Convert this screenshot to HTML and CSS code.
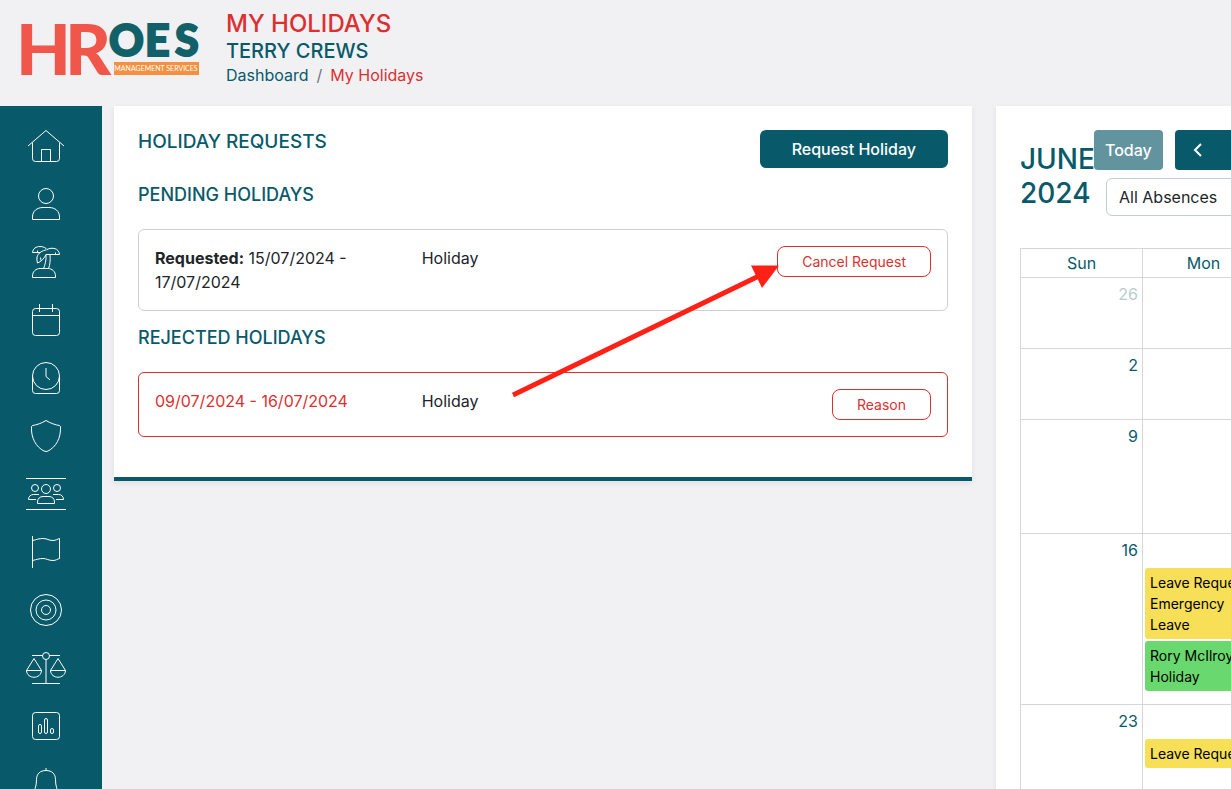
FILE: index.html
```html
<!DOCTYPE html>
<html lang="en">
<head>
  <meta charset="utf-8">
  <title>My Holidays</title>
  <link rel="stylesheet" href="styles.css">
</head>
<body>
  <header class="header">
    <a class="logo" href="#">
      <svg width="180" height="54" viewBox="0 0 180 54">
        <g class="logo-hr">
          <text x="-4" y="52">H</text>
          <text x="45" y="52">R</text>
        </g>
        <g class="logo-oes">
          <text x="89" y="33">O</text>
          <text x="125" y="33">E</text>
          <text x="155" y="33">S</text>
        </g>
        <rect x="94" y="39" width="85" height="13" fill="#f4903f"/>
        <text class="logo-tag" x="136" y="48">MANAGEMENT SERVICES</text>
      </svg>
    </a>
    <div>
      <h1 class="page-title">MY HOLIDAYS</h1>
      <h2 class="user-name">TERRY CREWS</h2>
      <nav class="breadcrumb">
        <a href="#">Dashboard</a><span class="divider">/</span><a class="current" href="#">My Holidays</a>
      </nav>
    </div>
  </header>

  <div class="layout">
    <nav class="sidebar">
      <a href="#" aria-label="Home">
        <svg class="icon" viewBox="0 0 40 40"><path d="M2 20L20 4.5L38 20M6.5 16.5V32.5A3 3 0 0 0 9.5 35.5H30.5A3 3 0 0 0 33.5 32.5V16.5M15.5 35.5V23.5H24.5V35.5"/></svg>
      </a>
      <a href="#" aria-label="Profile">
        <svg class="icon" viewBox="0 0 40 40"><circle cx="20" cy="12" r="7.5"/><path d="M6.5 35.5V33C6.5 27 11 23.5 17 23.5H23C29 23.5 33.5 27 33.5 33V35.5Z"/></svg>
      </a>
      <a href="#" aria-label="Holidays">
        <svg class="icon" viewBox="0 0 40 40"><path d="M6.5 35.5V34C6.5 29.5 10 26.5 14 26.5H22C26 26.5 29.5 29.5 29.5 34V35.5ZM6.5 10.5C7 6.5 10 4.5 14 4.5C17.5 4.5 20 6 21 7.5C26 5 33 6 33.5 12.5H20M6.5 10.5H14.5M11.5 8.5V10.5M29.5 10.5V12.5M20.5 8C17 8 12 11 11 15Q10.5 18 11.5 21C15 20 18.5 16 20 12.5M15 18.5L14.5 15.5M20 12.5C20.5 18 19 23 17.5 26.5M24 12.5C24.5 18 24 23 22.5 26.5"/></svg>
      </a>
      <a href="#" aria-label="Calendar">
        <svg class="icon" viewBox="0 0 40 40"><rect x="6.5" y="8.5" width="27" height="27" rx="3"/><path d="M6.5 15.5H33.5M13.5 4V12M26.5 4V12"/></svg>
      </a>
      <a href="#" aria-label="Clock">
        <svg class="icon" viewBox="0 0 40 40"><circle cx="20" cy="18" r="13.5"/><path d="M6.5 18V32.5A3 3 0 0 0 9.5 35.5H30.5A3 3 0 0 0 33.5 32.5V18M20 10V18.5L24 22"/></svg>
      </a>
      <a href="#" aria-label="Security">
        <svg class="icon" viewBox="0 0 40 40"><path d="M20 4.5C16 7 10.5 9 6.5 9.5Q5.5 10 5.5 11C5 22 10 31 18 35Q20 36 22 35C30 31 35 22 34.5 11Q34.5 10 33.5 9.5C29.5 9 24 7 20 4.5Z"/></svg>
      </a>
      <a href="#" aria-label="Team">
        <svg class="icon" viewBox="0 0 40 40"><path d="M0 4.5H40M0 35.5H40"/><circle cx="20" cy="15" r="4.5"/><circle cx="9" cy="14" r="3.5"/><circle cx="31" cy="14" r="3.5"/><path d="M11.5 29.5V28C11.5 24.5 14 22.5 17 22.5H23C26 22.5 28.5 24.5 28.5 28V29.5ZM13 20.5H7.5C4.5 20.5 2.5 22.5 2.5 25.5H10M27 20.5H32.5C35.5 20.5 37.5 22.5 37.5 25.5H30"/></svg>
      </a>
      <a href="#" aria-label="Reports">
        <svg class="icon" viewBox="0 0 40 40"><path d="M6.5 4V36M6.5 8.5C11 7.5 13 6.5 17 6.5C22 6.5 22 8.5 27 8.5C30 8.5 31.5 7 33.5 6.5V26.5C31.5 27 30 28.5 27 28.5C22 28.5 21 26.5 17 26.5C13 26.5 11 27.5 6.5 28.5"/></svg>
      </a>
      <a href="#" aria-label="Goals">
        <svg class="icon" viewBox="0 0 40 40"><circle cx="20" cy="20" r="15.5"/><circle cx="20" cy="20" r="10"/><circle cx="20" cy="20" r="4.5"/></svg>
      </a>
      <a href="#" aria-label="Policies">
        <svg class="icon" viewBox="0 0 40 40"><circle cx="20" cy="8" r="3.5"/><path d="M6 7.5H16.5M23.5 7.5H34M20 11.5V35.5M6 35.5H34M8 10.5L0.5 22.5H15.5ZM0.5 22.5C1 31.5 15 31.5 15.5 22.5M32 10.5L24.5 22.5H39.5ZM24.5 22.5C25 31.5 39 31.5 39.5 22.5"/></svg>
      </a>
      <a href="#" aria-label="Statistics">
        <svg class="icon" viewBox="0 0 40 40"><rect x="6.5" y="6.5" width="27" height="27" rx="3"/><rect x="12.5" y="18.5" width="3" height="9" rx="1.5"/><rect x="18.5" y="12.5" width="3" height="15" rx="1.5"/><rect x="24.5" y="22.5" width="3" height="5" rx="1.5"/></svg>
      </a>
      <a href="#" aria-label="Notifications">
        <svg class="icon" viewBox="0 0 40 40"><path d="M20 4V6.5M20 6.5C14 6.5 10.5 10 10.5 15.5C10.5 22 9 26 6 30.5H34C31 26 29.5 22 29.5 15.5C29.5 10 26 6.5 20 6.5Z"/></svg>
      </a>
    </nav>

    <main class="content">
      <section class="card requests">
        <div class="card-head">
          <h3 class="card-title">HOLIDAY REQUESTS</h3>
          <button class="btn btn-primary" type="button">Request Holiday</button>
        </div>

        <h4 class="section-title">PENDING HOLIDAYS</h4>
        <div class="request">
          <div><strong>Requested:</strong> 15/07/2024 - 17/07/2024</div>
          <div>Holiday</div>
          <div class="request-action"><button class="btn-outline" type="button">Cancel Request</button></div>
        </div>

        <h4 class="section-title">REJECTED HOLIDAYS</h4>
        <div class="request rejected">
          <div class="request-date">09/07/2024 - 16/07/2024</div>
          <div>Holiday</div>
          <div class="request-action"><button class="btn-outline" type="button">Reason</button></div>
        </div>

        <!-- Arrow pointing at the cancel button -->
        <svg class="arrow" width="268" height="136" viewBox="0 0 268 136">
          <path d="M1 134L247 15" stroke="#ff2116" stroke-width="5"/>
          <path d="M239 4.5L267 4.5L250 27Z" fill="#ff2116"/>
        </svg>
      </section>

      <section class="card calendar">
        <div class="calendar-inner">
          <div class="toolbar">
            <h2 class="month">JUNE 2024</h2>
            <div>
              <div class="toolbar-row">
                <button class="btn btn-today" type="button" disabled>Today</button>
                <button class="btn btn-prev" type="button" aria-label="Previous month">
                  <svg width="10" height="16" viewBox="0 0 10 16"><path d="M8 2L2 8L8 14" fill="none" stroke="#fff" stroke-width="2"/></svg>
                </button>
              </div>
              <select class="filter" aria-label="Absence type">
                <option>All Absences</option>
              </select>
            </div>
          </div>

          <table class="month-grid">
            <thead>
              <tr><th>Sun</th><th>Mon</th></tr>
            </thead>
            <tbody>
              <tr><td><span class="day other">26</span></td><td></td></tr>
              <tr><td><span class="day">2</span></td><td></td></tr>
              <tr class="tall"><td><span class="day">9</span></td><td></td></tr>
              <tr class="taller">
                <td><span class="day">16</span></td>
                <td class="with-events">
                  <div class="event yellow">Leave Request Emergency Leave</div>
                  <div class="event green">Rory McIlroy Holiday</div>
                </td>
              </tr>
              <tr class="tall">
                <td><span class="day">23</span></td>
                <td class="with-events">
                  <div class="event yellow">Leave Request</div>
                </td>
              </tr>
            </tbody>
          </table>
        </div>
      </section>
    </main>
  </div>
</body>
</html>
```
FILE: styles.css
```css
* {
  box-sizing: border-box;
}
body {
  margin: 0;
  height: 100vh;
  display: flex;
  flex-direction: column;
  overflow: hidden;
  font-family: Inter, "Liberation Sans", sans-serif;
  font-size: 16px;
  line-height: 24px;
  color: #212529;
  background: #f1f1f4;
}
h1, h2, h3, h4 {
  margin: 0;
  font-weight: 500;
  color: #085a6b;
}
a {
  color: #085a6b;
  text-decoration: none;
}
button, select {
  font-family: inherit;
}

/* Header */
.header {
  display: flex;
  gap: 26px;
  padding: 10px 20px 19px;
}
.logo {
  padding-top: 13px;
}
.logo svg {
  display: block;
  overflow: visible;
}
.logo-hr {
  font-family: Lato, sans-serif;
  font-size: 71px;
  font-weight: 900;
  fill: #f0574a;
}
.logo-oes {
  font-family: Lato, sans-serif;
  font-size: 43px;
  font-weight: 900;
  fill: #136168;
  stroke: #136168;
  stroke-width: 2;
}
.logo-tag {
  font-family: Lato, sans-serif;
  font-size: 7px;
  font-weight: 400;
  fill: #fff;
  text-anchor: middle;
}
.page-title {
  margin-bottom: 1px;
  font-size: 24px;
  line-height: 28px;
  color: #dc3030;
}
.user-name {
  font-size: 20px;
  line-height: 24px;
}
.divider {
  padding: 0 8px;
  color: #6c757d;
}
.current {
  color: #dc3030;
}

/* Sidebar */
.layout {
  display: flex;
  flex: 1;
  min-height: 0;
}
.sidebar {
  flex: 0 0 102px;
  padding: 11px 10px 0 0;
  overflow: hidden;
  background: #085a6b;
}
.sidebar a {
  display: flex;
  align-items: center;
  justify-content: center;
  height: 58px;
}
.icon {
  width: 40px;
  height: 40px;
  fill: none;
  stroke: #fff;
  stroke-width: 1;
}

/* Cards */
.content {
  flex: 1;
  min-width: 0;
  display: grid;
  grid-template-columns: minmax(0, 1fr) 235px;
  gap: 24px;
  align-items: start;
  padding-left: 12px;
}
.card {
  background: #fff;
  box-shadow: 0 2px 6px rgba(0, 0, 0, 0.08);
}
.requests {
  position: relative;
  padding: 24px;
  border-bottom: 4px solid #085a6b;
}
.card-head {
  display: flex;
  justify-content: space-between;
  margin-bottom: 16px;
}
.card-title {
  font-size: 19px;
  line-height: 23px;
}
.section-title {
  margin-bottom: 24px;
  font-size: 18px;
  line-height: 21px;
}
.request {
  display: grid;
  grid-template-columns: repeat(3, 1fr);
  gap: 24px;
  margin-bottom: 16px;
  padding: 16px;
  border: 1px solid #ced0d2;
  border-radius: 6px;
}
.request-action {
  display: flex;
  justify-content: flex-end;
  align-items: flex-start;
}
.rejected {
  border-color: #dc3030;
}
.request-date {
  color: #dc3030;
}
.arrow {
  position: absolute;
  top: 155px;
  left: 398px;
}

/* Buttons */
.btn {
  border: 0;
  border-radius: 6px;
  font-size: 16px;
  font-weight: 500;
  line-height: 24px;
  color: #fff;
  background: #085a6b;
}
.btn-primary {
  padding: 7px 32px;
}
.btn-outline {
  padding: 4px 24px;
  border: 1px solid #dc3030;
  border-radius: 8px;
  font-size: 14px;
  line-height: 21px;
  color: #dc3030;
  background: #fff;
}

/* Calendar */
.calendar {
  height: 100%;
}
.calendar-inner {
  height: 100%;
  padding: 24px 0 0 24px;
  overflow: hidden;
}
.toolbar {
  display: flex;
  margin-bottom: 32px;
}
.month {
  flex: 0 0 74px;
  min-width: 0;
  padding-top: 12px;
  font-size: 28px;
  line-height: 34px;
}
.toolbar-row {
  display: flex;
  align-items: flex-start;
  gap: 12px;
  margin-bottom: 8px;
}
.btn-today {
  padding: 8px 11px;
  border-radius: 4px;
  background: #6294a0;
}
.btn-prev {
  flex: 0 0 69px;
  padding: 12px 18px;
  border-radius: 4px;
  text-align: left;
}
.btn-prev svg {
  display: block;
}
.filter {
  width: 200px;
  height: 38px;
  margin-left: 12px;
  padding: 6px 12px;
  border: 1px solid #c5ccd2;
  border-radius: 6px;
  font-size: 16px;
  color: #212529;
  background: #fff;
  appearance: none;
}
.month-grid {
  width: 245px;
  table-layout: fixed;
  border-collapse: collapse;
  color: #085a6b;
}
.month-grid th,
.month-grid td {
  padding: 0;
  border: 1px solid #d6d6d6;
  vertical-align: top;
}
.month-grid th {
  padding: 2px;
  font-weight: 400;
}
.month-grid td {
  height: 71px;
}
.month-grid .tall td {
  height: 114px;
}
.month-grid .taller td {
  height: 171px;
}
.day {
  display: block;
  padding: 4px;
  text-align: right;
}
.other {
  opacity: 0.3;
}
.month-grid .with-events {
  padding: 34px 2px 0;
}
.event {
  margin-bottom: 2px;
  padding: 4px 5px;
  border-radius: 3px;
  font-size: 14px;
  line-height: 21px;
  color: #000;
}
.yellow {
  background: #f7df58;
}
.green {
  background: #69d86f;
}
```
